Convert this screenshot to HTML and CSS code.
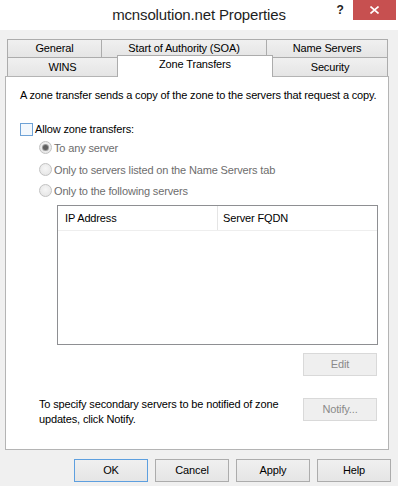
FILE: index.html
```html
<!DOCTYPE html>
<html>
<head>
<meta charset="utf-8">
<link rel="stylesheet" href="styles.css">
</head>
<body>
<div class="window">
  <div class="titlebar">
    <div></div>
    <div class="title">mcnsolution.net Properties</div>
    <div class="controls">
      <span class="help">?</span>
      <span class="close"><svg width="9" height="8" viewBox="0 0 9 8"><path d="M0.5 0.5 L8.5 7.5 M8.5 0.5 L0.5 7.5" stroke="#fff" stroke-width="1.6" fill="none"/></svg></span>
    </div>
  </div>
  <div class="content">
    <div class="tabs">
      <div class="tabrow">
        <div class="tab t-general">General</div>
        <div class="tab t-soa">Start of Authority (SOA)</div>
        <div class="tab t-ns">Name Servers</div>
      </div>
      <div class="tabrow row2">
        <div class="tab t-wins">WINS</div>
        <div class="tab t-zone selected">Zone Transfers</div>
        <div class="tab t-sec">Security</div>
      </div>
    </div>
    <div class="panel">
      <div class="desc">A zone transfer sends a copy of the zone to the servers that request a copy.</div>
      <div class="row check-row"><span class="checkbox"></span><span class="label">Allow zone transfers:</span></div>
      <div class="row radio-row r1"><span class="radio checked"></span><span class="label disabled">To any server</span></div>
      <div class="row radio-row r2"><span class="radio"></span><span class="label disabled">Only to servers listed on the Name Servers tab</span></div>
      <div class="row radio-row r3"><span class="radio"></span><span class="label disabled">Only to the following servers</span></div>
      <div class="list">
        <div class="list-head">
          <div class="col c1">IP Address</div>
          <div class="col c2">Server FQDN</div>
        </div>
      </div>
      <div class="edit-row"><span class="btn disabled">Edit</span></div>
      <div class="notify-row">
        <div class="note">To specify secondary servers to be notified of zone<br>updates, click Notify.</div>
        <span class="btn disabled notify">Notify...</span>
      </div>
    </div>
    <div class="buttons">
      <span class="btn default">OK</span>
      <span class="btn">Cancel</span>
      <span class="btn">Apply</span>
      <span class="btn">Help</span>
    </div>
  </div>
</div>
</body>
</html>
```
FILE: styles.css
```css
* { box-sizing: border-box; }
html, body { margin: 0; padding: 0; }
body {
  font-family: "Liberation Sans", Arial, sans-serif;
  font-size: 11px;
  letter-spacing: -0.15px;
  color: #000;
  background: #f0f0f0;
}
.window {
  width: 398px;
  height: 486px;
  background: #f0f0f0;
  overflow: hidden;
}
.titlebar {
  height: 30px;
  background: #ffffff;
  display: grid;
  grid-template-columns: 1fr auto 1fr;
  align-items: start;
}
.title {
  font-size: 15px;
  line-height: 30px;
  color: #1e1e1e;
  white-space: nowrap;
}
.controls {
  display: flex;
  justify-content: flex-end;
  align-items: flex-start;
}
.help {
  width: 16px;
  margin-right: 5px;
  margin-top: 2px;
  text-align: center;
  font-weight: bold;
  font-size: 12px;
  line-height: 16px;
  color: #222;
}
.close {
  width: 43px;
  height: 20px;
  margin-right: 2px;
  background: #c75050;
  display: flex;
  align-items: center;
  justify-content: center;
}
.content {
  padding-top: 9px;
}
.tabs {
  margin-left: 7px;
  width: 381px;
}
.tabrow {
  display: flex;
  align-items: flex-start;
  height: 19px;
}
.row2 {
  margin-top: -1px;
}
.tab {
  height: 19px;
  border: 1px solid #acacac;
  background: linear-gradient(#f0f0f0, #e5e5e5);
  text-align: center;
  line-height: 17px;
  margin-left: -1px;
  white-space: nowrap;
}
.tab:first-child { margin-left: 0; }
.row2 .tab {
  border-bottom: 0;
  line-height: 18px;
}
.tab.selected {
  height: 22px;
  margin-top: -2px;
  margin-bottom: -1px;
  background: #ffffff;
  border-bottom: 0;
  line-height: 17px;
  position: relative;
  z-index: 2;
}
.t-general { width: 95px; }
.t-soa { width: 166px; }
.t-ns { width: 122px; }
.t-wins { width: 111px; }
.t-zone { width: 156px; }
.t-sec { width: 116px; }
.panel {
  margin-left: 5px;
  width: 384px;
  height: 374px;
  border: 1px solid #b4b4b4;
  background: #ffffff;
  padding: 0 11px 0 14px;
  position: relative;
  z-index: 1;
}
.desc {
  margin-top: 11px;
  line-height: 15px;
  white-space: nowrap;
}
.row {
  display: flex;
  align-items: center;
  height: 15px;
  white-space: nowrap;
}
.check-row { margin-top: 18px; }
.checkbox {
  width: 13px;
  height: 13px;
  border: 1px solid #6ea2d6;
  background: #f3f8fd;
  margin-right: 2px;
  margin-top: 1px;
  flex: none;
}
.radio-row { margin-left: 19px; }
.r1 { margin-top: 4px; }
.r2 { margin-top: 7px; }
.r3 { margin-top: 6px; }
.radio {
  width: 13px;
  height: 13px;
  border-radius: 50%;
  border: 1px solid #c2c2c2;
  background: radial-gradient(circle at 50% 40%, #f6f6f6, #e2e2e2);
  margin-right: 2px;
  flex: none;
  display: flex;
  align-items: center;
  justify-content: center;
}
.radio.checked::after {
  content: "";
  width: 5px;
  height: 5px;
  border-radius: 50%;
  background: #5f5f5f;
  box-shadow: 0 0 0 1px #9c9c9c;
}
.label.disabled { color: #6d6d6d; }
.list {
  margin-top: 7px;
  margin-left: 37px;
  width: 321px;
  height: 140px;
  border: 1px solid #8e8f92;
  background: #fff;
}
.list-head {
  display: flex;
  height: 25px;
  border-bottom: 1px solid #eeeeee;
}
.col {
  line-height: 24px;
  white-space: nowrap;
}
.c1 {
  width: 160px;
  padding-left: 7px;
  border-right: 1px solid #e5e5e5;
}
.c2 { padding-left: 5px; }
.edit-row {
  display: flex;
  justify-content: flex-end;
  margin-top: 8px;
}
.btn {
  display: inline-block;
  width: 74px;
  height: 23px;
  border: 1px solid #acacac;
  background: linear-gradient(#f0f0f0, #e5e5e5);
  text-align: center;
  line-height: 21px;
  white-space: nowrap;
}
.btn.disabled {
  border-color: #d9d9d9;
  background: #efefef;
  color: #8a8a8a;
}
.btn.default {
  border-color: #5d9fdf;
}
.notify-row {
  display: flex;
  justify-content: space-between;
  align-items: flex-start;
  margin-top: 21px;
}
.note {
  margin-left: 19px;
  line-height: 15px;
  white-space: nowrap;
}
.notify { margin-top: 1px; }
.buttons {
  display: flex;
  gap: 7px;
  padding-left: 74px;
  margin-top: 9px;
}
```
